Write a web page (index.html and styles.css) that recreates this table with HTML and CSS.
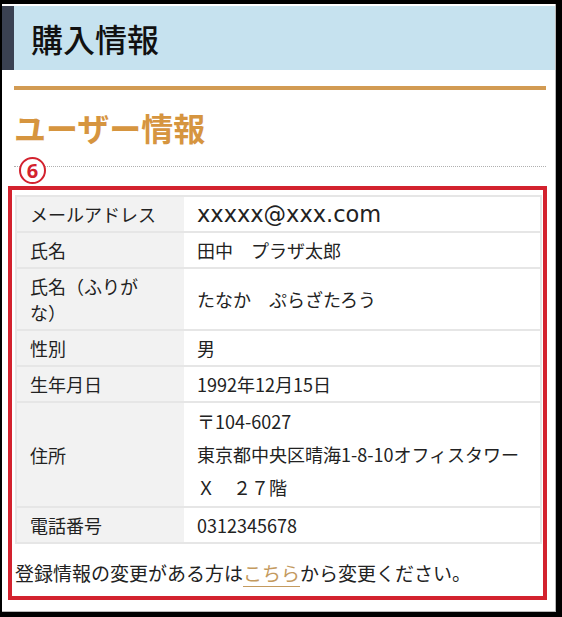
FILE: index.html
```html
<!DOCTYPE html>
<html lang="ja">
<head>
<meta charset="utf-8">
<link rel="stylesheet" href="styles.css">
</head>
<body>
<div class="frame">
  <header class="page-header">購入情報</header>
  <div class="content">
    <div class="rule"></div>
    <div class="section">
      <h2 class="section-title">ユーザー情報</h2>
      <span class="marker">6</span>
    </div>
    <div class="annot">
      <table class="info">
        <colgroup><col class="col-label"><col></colgroup>
        <tr><th>メールアドレス</th><td class="email">xxxxx@xxx.com</td></tr>
        <tr><th>氏名</th><td>田中　プラザ太郎</td></tr>
        <tr><th>氏名（ふりがな）</th><td>たなか　ぷらざたろう</td></tr>
        <tr><th>性別</th><td>男</td></tr>
        <tr><th>生年月日</th><td>1992年12月15日</td></tr>
        <tr><th>住所</th><td class="addr">〒104-6027<br>東京都中央区晴海1-8-10オフィスタワー<br>Ｘ　２７階</td></tr>
        <tr><th>電話番号</th><td>0312345678</td></tr>
      </table>
      <p class="note">登録情報の変更がある方は<a class="link" href="#">こちら</a>から変更ください。</p>
    </div>
  </div>
</div>
</body>
</html>
```

FILE: styles.css
```css
html, body {
  margin: 0;
  padding: 0;
  background: #000;
}
body {
  font-family: "Noto Sans CJK JP", "Noto Sans", sans-serif;
  color: #222;
}
.frame {
  margin: 4px 6px 0 2px;
  height: 608px;
  box-sizing: border-box;
  background: #fff;
  border-right: 1px solid #b8b8b8;
  border-bottom: 1px solid #b8b8b8;
  padding-top: 2px;
  overflow: hidden;
}
.page-header {
  height: 64px;
  box-sizing: border-box;
  border-left: 12px solid #3a4152;
  background: #c6e2ef;
  display: flex;
  align-items: center;
  padding-left: 17px;
  font-size: 32px;
  font-weight: 500;
  color: #111;
}
.content {
  padding: 0 9px 0 12px;
}
.rule {
  margin-top: 16px;
  height: 4px;
  background: #d29b53;
}
.section {
  position: relative;
  border-bottom: 1px dotted #b0b0b0;
  padding-top: 17px;
  padding-bottom: 19px;
}
.section-title {
  margin: 0;
  font-size: 32px;
  line-height: 40px;
  font-weight: 700;
  color: #d6953f;
}
.marker {
  position: absolute;
  left: 5px;
  top: 67px;
  width: 23px;
  height: 23px;
  border: 2.5px solid #d3222e;
  border-radius: 50%;
  background: #fff;
  display: flex;
  align-items: center;
  justify-content: center;
  font-family: "Noto Sans", sans-serif;
  font-size: 20px;
  line-height: 1;
  font-weight: 700;
  color: #d3222e;
}
.annot {
  border: 4px solid #d3222e;
  margin: 19px -1px 0 -6px;
  padding: 5px 1px 8px 3px;
}
.info {
  width: 100%;
  table-layout: fixed;
  border-collapse: collapse;
  border: 2px solid #e6e6e6;
  font-size: 18px;
}
.col-label {
  width: 168px;
}
.info th, .info td {
  border-top: 2px solid #e6e6e6;
  border-bottom: 2px solid #e6e6e6;
  vertical-align: middle;
  text-align: left;
}
.info th {
  background: #f2f2f2;
  font-weight: 400;
  padding: 4px 20px 4px 13px;
  line-height: 26px;
}
.info td {
  background: #fff;
  padding: 0 13px;
  line-height: 33px;
}
.info td.addr {
  padding: 2px 13px;
}
.info td.email {
  font-family: "DejaVu Sans", Verdana, sans-serif;
  font-size: 22.5px;
}
.note {
  margin: 14px 0 0 0;
  font-size: 19px;
  line-height: 30px;
  color: #222;
}
.link {
  color: #c49a5e;
  text-decoration: underline;
  text-decoration-color: #c49a5e;
  text-underline-offset: 5px;
}
```
